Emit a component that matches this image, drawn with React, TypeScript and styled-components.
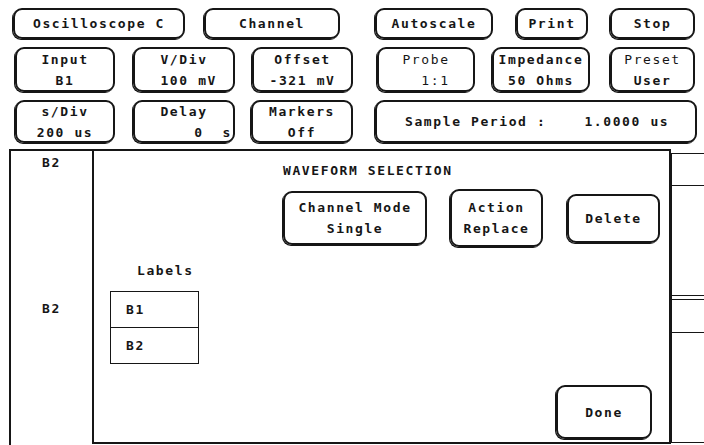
import styled, { createGlobalStyle } from "styled-components";

const GlobalStyle = createGlobalStyle`
  html, body {
    margin: 0;
    padding: 0;
    background: #fff;
  }
`;

const Screen = styled.div`
  width: 704px;
  height: 445px;
  overflow: hidden;
  background: #fff;
  color: #161616;
  font-family: "DejaVu Sans Mono", "Liberation Mono", monospace;
  font-weight: bold;
  font-size: 13px;
  letter-spacing: 1.6px;
`;

const Controls = styled.div`
  display: flex;
  flex-direction: column;
  gap: 8px;
  padding-top: 8px;
  height: 149px;
  box-sizing: border-box;
`;

const KeyRow = styled.div<{ $h: number }>`
  display: flex;
  height: ${({ $h }) => $h}px;
`;

const Key = styled.div<{ $w: number; $ml: number; $h?: number }>`
  box-sizing: border-box;
  width: ${({ $w }) => $w}px;
  height: ${({ $h }) => ($h ? `${$h}px` : "100%")};
  margin-left: ${({ $ml }) => $ml}px;
  border: 2px solid #161616;
  border-radius: 9px;
  box-shadow: -1px 1px 0 #161616;
  display: flex;
  flex-direction: column;
  justify-content: center;
  line-height: 21px;
  text-align: center;
  white-space: pre;
  flex-shrink: 0;
`;

const KeyLine = styled.div<{ $align?: "left" | "right" | "center"; $pad?: number; $light?: boolean }>`
  text-align: ${({ $align }) => $align ?? "center"};
  padding: 0 ${({ $pad }) => $pad ?? 0}px;
  font-weight: ${({ $light }) => ($light ? "normal" : "bold")};
`;

const PeriodKey = styled(Key)`
  flex-direction: row;
  justify-content: flex-start;
  align-items: center;
  padding-left: 28px;
`;

const PeriodValue = styled.span`
  margin-left: 38px;
`;

const Lower = styled.div`
  display: flex;
  height: 296px;
  margin-left: 9px;
`;

const TraceColumn = styled.div`
  box-sizing: border-box;
  width: 83px;
  border-left: 2px solid #161616;
  border-top: 2px solid #161616;
  display: flex;
  flex-direction: column;
  align-items: center;
  padding-top: 3px;
  line-height: 18px;
`;

const TraceName = styled.div<{ $mt: number }>`
  margin-top: ${({ $mt }) => $mt}px;
`;

const Dialog = styled.div`
  box-sizing: border-box;
  width: 579px;
  height: 295px;
  border: 2px solid #161616;
  display: flex;
  flex-direction: column;
  align-items: flex-start;
`;

const DialogTitle = styled.div`
  margin: 12px 0 0 189px;
  line-height: 16px;
`;

const ModeRow = styled.div`
  display: flex;
  align-items: center;
  margin: 10px 0 0 189px;
  height: 58px;
`;

const LabelsTitle = styled.div`
  margin: 16px 0 0 43px;
  line-height: 16px;
`;

const LabelTable = styled.div`
  margin: 12px 0 0 16px;
  width: 89px;
  border: 1.5px solid #161616;
  box-sizing: border-box;
`;

const LabelCell = styled.div`
  height: 35px;
  line-height: 35px;
  padding-left: 15px;
  & + & {
    border-top: 1.5px solid #161616;
  }
`;

const DoneKey = styled(Key)`
  align-self: flex-end;
  margin-right: 17px;
  margin-top: 21px;
`;

const Backdrop = styled.div`
  flex: 1;
  display: flex;
  flex-direction: column;
  margin-top: 4px;
  border-left: 1px solid #161616;
  height: 290px;
`;

const BackdropCell = styled.div<{ $h: number }>`
  height: ${({ $h }) => $h}px;
  border-top: 1.5px solid #161616;
  box-sizing: border-box;
  &:last-child {
    border-bottom: 1.5px solid #161616;
  }
`;

export default function App() {
  return (
    <>
      <GlobalStyle />
      <Screen>
        <Controls>
          <KeyRow $h={31}>
            <Key $w={172} $ml={13}>Oscilloscope C</Key>
            <Key $w={136} $ml={19}>Channel</Key>
            <Key $w={118} $ml={35}>Autoscale</Key>
            <Key $w={72} $ml={23}>Print</Key>
            <Key $w={85} $ml={22}>Stop</Key>
          </KeyRow>
          <KeyRow $h={45}>
            <Key $w={100} $ml={15}>
              <KeyLine>Input</KeyLine>
              <KeyLine>B1</KeyLine>
            </Key>
            <Key $w={102} $ml={18}>
              <KeyLine>V/Div</KeyLine>
              <KeyLine>{" 100 mV"}</KeyLine>
            </Key>
            <Key $w={101} $ml={17}>
              <KeyLine>Offset</KeyLine>
              <KeyLine>-321 mV</KeyLine>
            </Key>
            <Key $w={98} $ml={24}>
              <KeyLine $light>Probe</KeyLine>
              <KeyLine $light>{"  1:1"}</KeyLine>
            </Key>
            <Key $w={98} $ml={17}>
              <KeyLine>Impedance</KeyLine>
              <KeyLine>50 Ohms</KeyLine>
            </Key>
            <Key $w={85} $ml={20}>
              <KeyLine $light>Preset</KeyLine>
              <KeyLine>User</KeyLine>
            </Key>
          </KeyRow>
          <KeyRow $h={43}>
            <Key $w={100} $ml={15}>
              <KeyLine>s/Div</KeyLine>
              <KeyLine>200 us</KeyLine>
            </Key>
            <Key $w={102} $ml={18}>
              <KeyLine>Delay</KeyLine>
              <KeyLine $align="right" $pad={1}>{"0  s"}</KeyLine>
            </Key>
            <Key $w={102} $ml={16}>
              <KeyLine>Markers</KeyLine>
              <KeyLine>Off</KeyLine>
            </Key>
            <PeriodKey $w={322} $ml={22}>
              <span>Sample Period :</span>
              <PeriodValue>1.0000 us</PeriodValue>
            </PeriodKey>
          </KeyRow>
        </Controls>
        <Lower>
          <TraceColumn>
            <TraceName $mt={0}>B2</TraceName>
            <TraceName $mt={128}>B2</TraceName>
          </TraceColumn>
          <Dialog>
            <DialogTitle>WAVEFORM SELECTION</DialogTitle>
            <ModeRow>
              <Key $w={144} $ml={0} $h={54}>
                <KeyLine>Channel Mode</KeyLine>
                <KeyLine>Single</KeyLine>
              </Key>
              <Key $w={93} $ml={23} $h={58}>
                <KeyLine>Action</KeyLine>
                <KeyLine>Replace</KeyLine>
              </Key>
              <Key $w={93} $ml={24} $h={49}>
                Delete
              </Key>
            </ModeRow>
            <LabelsTitle>Labels</LabelsTitle>
            <LabelTable>
              <LabelCell>B1</LabelCell>
              <LabelCell>B2</LabelCell>
            </LabelTable>
            <DoneKey $w={96} $ml={0} $h={54}>
              Done
            </DoneKey>
          </Dialog>
          <Backdrop>
            <BackdropCell $h={32} />
            <BackdropCell $h={110} />
            <BackdropCell $h={4} />
            <BackdropCell $h={33} />
            <BackdropCell $h={111} />
          </Backdrop>
        </Lower>
      </Screen>
    </>
  );
}
